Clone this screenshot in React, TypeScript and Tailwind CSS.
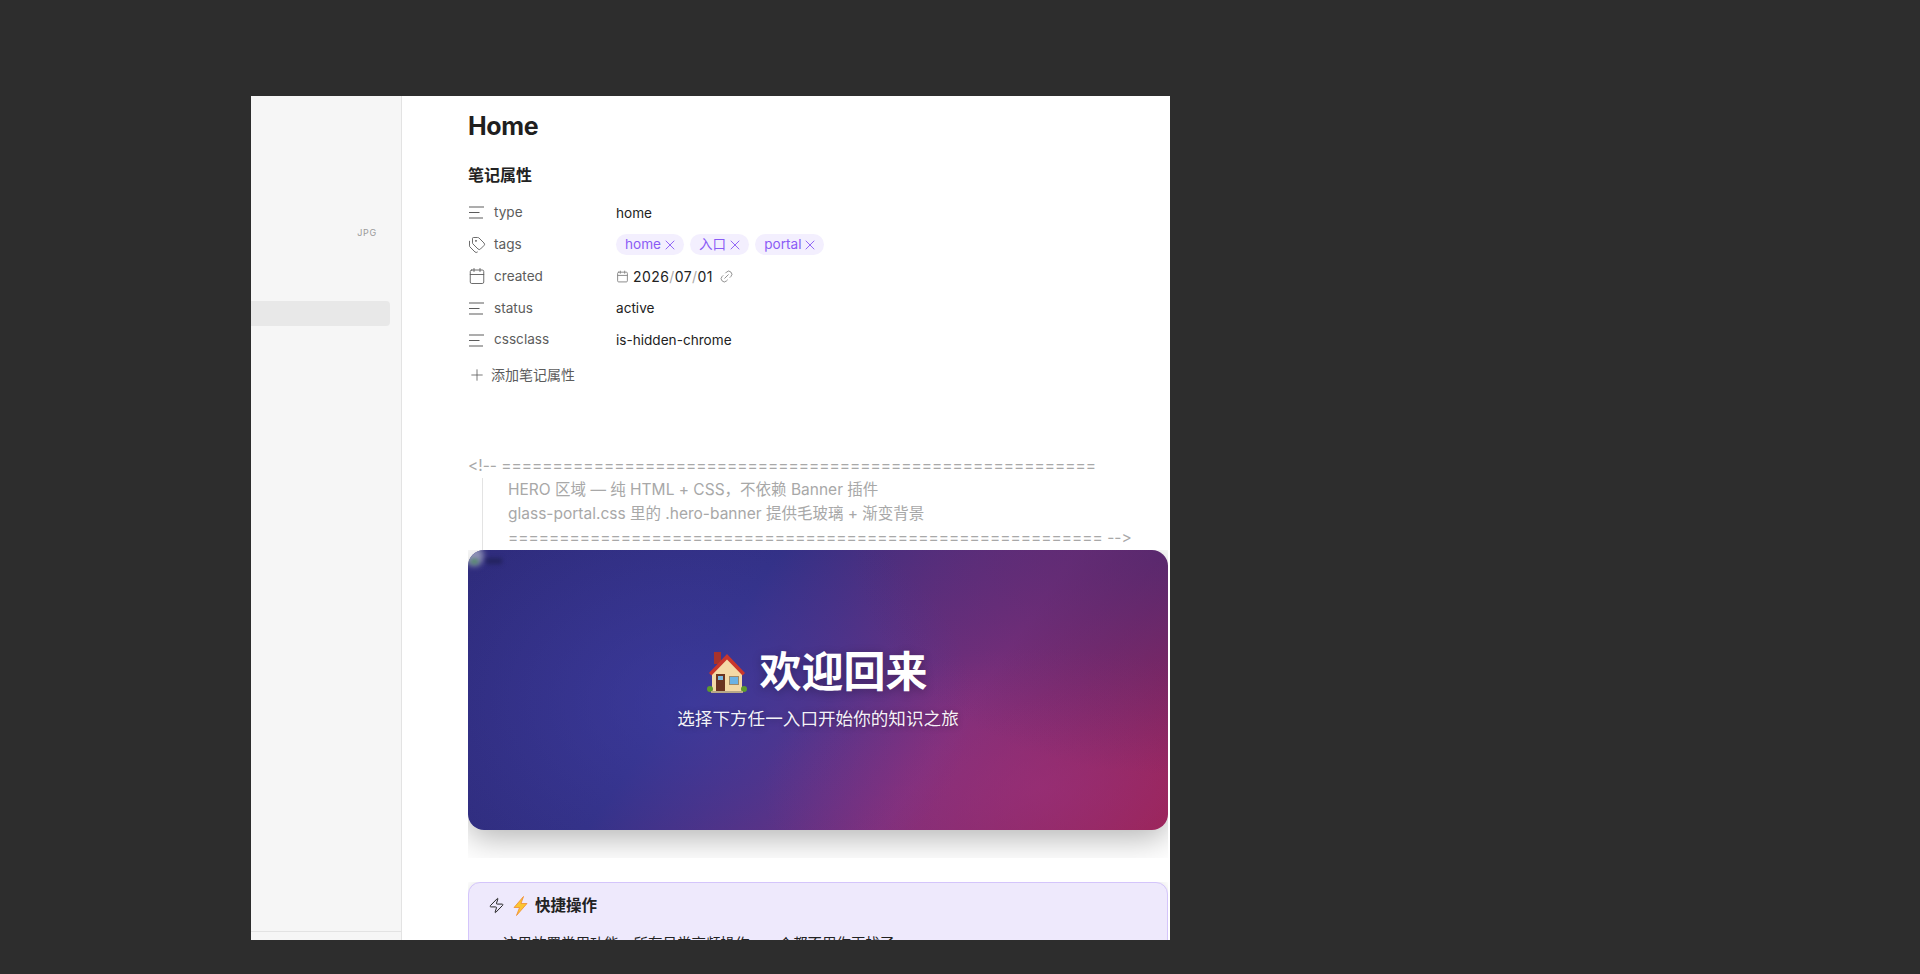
import { Calendar, Link2, Plus, Tags, X, Zap } from 'lucide-react';

const eq = '='.repeat(58);

function LinesIcon() {
  return (
    <svg width="17" height="17" viewBox="0 0 17 17" fill="none" stroke="#5c5c5c" strokeWidth="1.2">
      <path d="M1 3h15M1 8.500h10.500M1 14h14" />
    </svg>
  );
}

function PropRow({ icon, name, children }: { icon: React.ReactNode; name: string; children: React.ReactNode }) {
  return (
    <div className="flex items-center h-[31.8px]">
      <div className="w-[26px] flex items-center">{icon}</div>
      <div className="w-[122px] text-[13.6px] text-[#5c5c5c] -mt-px">{name}</div>
      <div className="flex items-center text-[13.6px] text-[#222222]">{children}</div>
    </div>
  );
}

function Pill({ label }: { label: string }) {
  return (
    <span className="flex items-center gap-px h-[21px] pl-[9px] pr-[6px] rounded-full bg-[#f3effe] text-[#8a5cf5] text-[13.6px]">
      {label}
      <X size={16} strokeWidth={1.4} />
    </span>
  );
}

function HouseEmoji() {
  return (
    <svg width="42" height="44" viewBox="0 0 40 44">
      <rect x="7" y="2" width="7" height="12" fill="#a8322b" />
      <path d="M5 22 20 6l15 16v19H5z" fill="#f4d9a6" />
      <path d="M2 23 20 4l18 19-2.500 2.500L20 9.500 4.500 25.500z" fill="#c9362c" />
      <rect x="9" y="24" width="9" height="17" fill="#6b3420" />
      <rect x="11" y="26" width="5" height="4" fill="#79b8e0" />
      <rect x="22" y="26" width="10" height="9" fill="#a08a68" />
      <rect x="23" y="27" width="8" height="7" fill="#6cb2e4" />
      <circle cx="3" cy="39" r="3" fill="#5d9a2e" />
      <circle cx="37" cy="39" r="3" fill="#5d9a2e" />
      <rect x="4" y="41" width="32" height="2" fill="#b8a888" />
    </svg>
  );
}

function BoltEmoji() {
  return (
    <svg width="15" height="20" viewBox="0 0 15 20">
      <path d="M10.500 0.500 1 11.500h5.500L3.500 19.500 14 7.500H8z" fill="#fbc531" stroke="#f08c2e" strokeWidth="0.8" />
    </svg>
  );
}

export default function App() {
  return (
    <div className="h-[974px] overflow-hidden bg-[#2d2d2d] pt-24 pl-[251px] font-['Inter','Noto_Sans_CJK_SC',sans-serif]">
      <div className="w-[919px] h-[844px] bg-white flex overflow-hidden">
        <aside className="w-[151px] shrink-0 bg-[#f6f6f6] border-r border-[#e3e3e3] flex flex-col">
          <div className="h-[205px] pr-6 pt-[130px] text-right text-[9px] tracking-[0.08em] text-[#9a9a9a]">JPG</div>
          <div className="h-[25px] mr-[11px] rounded-r-[4px] bg-[#e8e8e8]" />
          <div className="mt-auto h-[9px] border-t border-[#e3e3e3]" />
        </aside>

        <main className="flex-1 min-w-0 pl-[66px] pr-[2px]">
          <h1 className="pt-[14px] text-[25px] leading-8 font-bold tracking-[-0.015em] text-[#1f1f1f]">Home</h1>
          <h2 className="mt-[22px] text-[16px] leading-[22px] font-semibold text-[#222222]">笔记属性</h2>

          <div className="mt-[11px]">
            <PropRow icon={<LinesIcon />} name="type">home</PropRow>
            <PropRow icon={<Tags size={18} strokeWidth={1.2} color="#5c5c5c" />} name="tags">
              <div className="flex gap-[6px]">
                <Pill label="home" />
                <Pill label="入口" />
                <Pill label="portal" />
              </div>
            </PropRow>
            <PropRow icon={<Calendar size={18} strokeWidth={1.2} color="#5c5c5c" />} name="created">
              <Calendar size={13} strokeWidth={1.8} color="#8a8a8a" />
              <span className="ml-1 text-[14px] tracking-[0.03em]">
                2026<span className="text-[#aaaaaa]">/</span>07<span className="text-[#aaaaaa]">/</span>01
              </span>
              <Link2 size={15} strokeWidth={1.2} color="#777777" className="ml-[6px] -rotate-45" />
            </PropRow>
            <PropRow icon={<LinesIcon />} name="status">active</PropRow>
            <PropRow icon={<LinesIcon />} name="cssclass">is-hidden-chrome</PropRow>
          </div>

          <div className="mt-[3px] h-8 flex items-center gap-[5px] text-[14px] text-[#5c5c5c]">
            <Plus size={18} strokeWidth={1.1} />
            添加笔记属性
          </div>

          <div className="mt-[63px] text-[15.5px] leading-6 text-[#a8a8a8] [font-variant-ligatures:none] [font-feature-settings:'calt'_0]">
            <div className="whitespace-nowrap">{'<!-- ' + eq}</div>
            <div className="ml-[14px] pl-[25px] border-l border-[#e3e3e3] whitespace-nowrap">
              <div>HERO 区域 — 纯 HTML + CSS，不依赖 Banner 插件</div>
              <div>glass-portal.css 里的 .hero-banner 提供毛玻璃 + 渐变背景</div>
              <div>{eq + ' -->'}</div>
            </div>
          </div>

          <div className="h-[308px] overflow-hidden">
            <div className="relative h-[280px] rounded-2xl overflow-hidden shadow-[0_8px_32px_rgba(0,0,0,0.3)] bg-[radial-gradient(ellipse_45%_80%_at_100%_0%,rgba(70,40,110,0.7)_0%,rgba(70,40,110,0)_100%),radial-gradient(ellipse_40%_50%_at_82%_85%,rgba(160,50,125,0.55)_0%,rgba(160,50,125,0)_100%),radial-gradient(ellipse_40%_75%_at_32%_55%,rgba(66,64,170,0.6)_0%,rgba(66,64,170,0)_100%),linear-gradient(125deg,#2f2c7d_0%,#312f82_35%,#7c2f7b_68%,#9b2150_100%)] flex flex-col items-center justify-center pb-[2px]">
              <div className="absolute -left-[4px] -top-[4px] w-[20px] h-[20px] rounded-full bg-[#8d90b5] blur-[3px]" />
              <div className="absolute left-[3px] top-[9px] w-[7px] h-[5px] bg-[#4f8a63] blur-[2px]" />
              <div className="absolute left-[18px] top-[8px] w-[16px] h-[6px] bg-[#23235f] blur-[2px]" />
              <div className="flex items-center gap-[11px] -ml-[2px] text-[42px] leading-[52px] font-bold text-white [text-shadow:0_2px_10px_rgba(0,0,0,0.3)]">
                <HouseEmoji />
                欢迎回来
              </div>
              <div className="mt-2 text-[17.6px] leading-[26px] text-white/95 [text-shadow:0_1px_6px_rgba(0,0,0,0.3)]">
                选择下方任一入口开始你的知识之旅
              </div>
            </div>
          </div>

          <div className="mt-6 overflow-hidden">
            <div className="h-[120px] rounded-xl border border-[#d4c5fb] bg-[#eee9fc] shadow-[0_0_8px_rgba(0,0,0,0.12)] pl-[19px] pr-4 pt-[12px]">
              <div className="flex items-center gap-[8px] text-[15.5px] leading-[22px] font-semibold text-[#222222]">
                <Zap size={17} strokeWidth={1.4} color="#222222" />
                <BoltEmoji />
                <span className="-ml-[1px]">快捷操作</span>
              </div>
              <p className="mt-[15px] pl-[15px] text-[14.500px] leading-6 text-[#222222]">
                这里放置常用功能，所有日常高频操作，一个都不用你再找了。
              </p>
            </div>
          </div>
        </main>
      </div>
    </div>
  );
}
